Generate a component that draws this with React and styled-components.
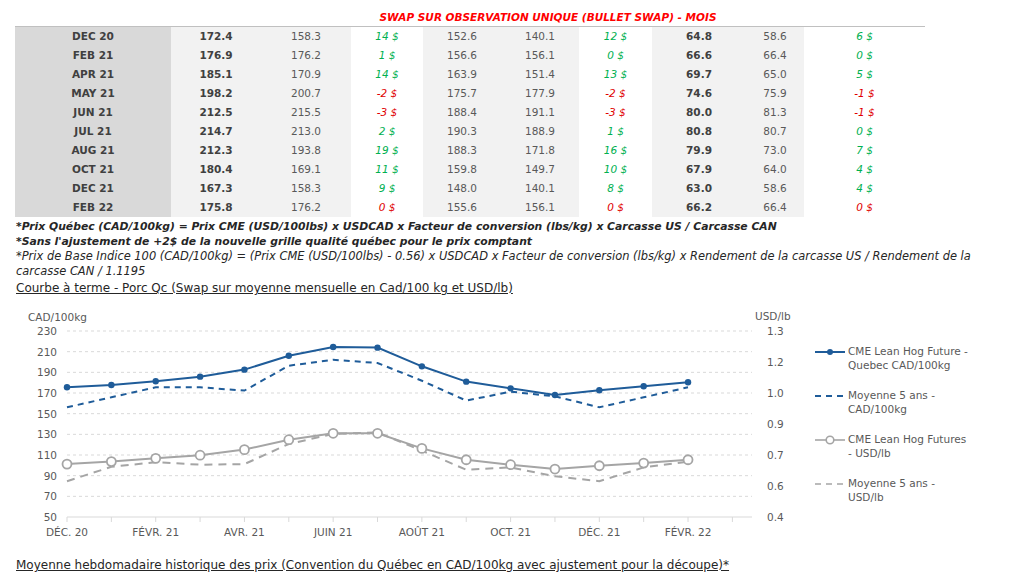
import React from "react";
import styled, { createGlobalStyle } from "styled-components";

const GlobalStyle = createGlobalStyle`
  html, body {
    margin: 0;
    padding: 0;
    background: #ffffff;
  }
  body {
    font-family: "DejaVu Sans", "Liberation Sans", sans-serif;
    color: #404040;
  }
`;

const rows = [
  ["DEC 20", "172.4", "158.3", "14 $", "152.6", "140.1", "12 $", "64.8", "58.6", "6 $"],
  ["FEB 21", "176.9", "176.2", "1 $", "156.6", "156.1", "0 $", "66.6", "66.4", "0 $"],
  ["APR 21", "185.1", "170.9", "14 $", "163.9", "151.4", "13 $", "69.7", "65.0", "5 $"],
  ["MAY 21", "198.2", "200.7", "-2 $", "175.7", "177.9", "-2 $", "74.6", "75.9", "-1 $", true],
  ["JUN 21", "212.5", "215.5", "-3 $", "188.4", "191.1", "-3 $", "80.0", "81.3", "-1 $", true],
  ["JUL 21", "214.7", "213.0", "2 $", "190.3", "188.9", "1 $", "80.8", "80.7", "0 $"],
  ["AUG 21", "212.3", "193.8", "19 $", "188.3", "171.8", "16 $", "79.9", "73.0", "7 $"],
  ["OCT 21", "180.4", "169.1", "11 $", "159.8", "149.7", "10 $", "67.9", "64.0", "4 $"],
  ["DEC 21", "167.3", "158.3", "9 $", "148.0", "140.1", "8 $", "63.0", "58.6", "4 $"],
  ["FEB 22", "175.8", "176.2", "0 $", "155.6", "156.1", "0 $", "66.2", "66.4", "0 $", true],
];

// column kind: m = month, b = bold value, v = value, d = difference
const cols = [
  { kind: "m", bg: "#d9d9d9" },
  { kind: "b", bg: "#f2f2f2" },
  { kind: "v", bg: "#f2f2f2" },
  { kind: "d", bg: "#ffffff" },
  { kind: "v", bg: "#f2f2f2" },
  { kind: "v", bg: "#f2f2f2" },
  { kind: "d", bg: "#ffffff" },
  { kind: "b", bg: "#f2f2f2" },
  { kind: "v", bg: "#f2f2f2" },
  { kind: "d", bg: "#ffffff" },
];

const COLS = "156px 90px 90px 72px 78px 78px 73px 94px 58px 121px";

const months = ["DÉC. 20", "FÉVR. 21", "AVR. 21", "JUIN 21", "AOÛT 21", "OCT. 21", "DÉC. 21", "FÉVR. 22"];

const cme = [175.5, 177.7, 181.3, 185.8, 192.6, 206.1, 214.5, 213.9, 195.8, 181, 174.5, 168, 172.6, 176.5, 180.4];
const cmeAvg = [156.2, 165.8, 175.5, 175.5, 172.3, 196.4, 202.1, 199, 181.9, 162.6, 171.3, 166.8, 156.2, 165.8, 175.5];
const usd = [0.656, 0.668, 0.684, 0.699, 0.726, 0.774, 0.805, 0.805, 0.732, 0.677, 0.653, 0.632, 0.648, 0.661, 0.677];
const usdAvg = [0.573, 0.643, 0.665, 0.653, 0.656, 0.753, 0.802, 0.81, 0.721, 0.629, 0.64, 0.597, 0.573, 0.64, 0.668];

const BLUE = "#1f5c99";
const GRAY = "#a5a5a5";

const X0 = 67;
const STEP = 44.36;
const TOP = 32;
const BOTTOM = 218;
const px = (i) => X0 + i * STEP;
const pyCad = (v) => BOTTOM - ((v - 50) / 180) * (BOTTOM - TOP);
const pyUsd = (v) => BOTTOM - ((v - 0.4) / 0.9) * (BOTTOM - TOP);
const pts = (arr, fy) => arr.map((v, i) => `${px(i).toFixed(1)},${fy(v).toFixed(1)}`).join(" ");

export default function App() {
  return (
    <React.Fragment>
      <GlobalStyle />
      <Page>
        <Table>
          <HeadRow>
            <span />
            <Title>SWAP SUR OBSERVATION UNIQUE (BULLET SWAP) - MOIS</Title>
          </HeadRow>
          <Body>
            {rows.map((r) => (
              <Row key={r[0]}>
                {cols.map((c, i) => (
                  <Cell key={i} $bg={c.bg} $kind={c.kind} $down={r[10]}>
                    {r[i]}
                  </Cell>
                ))}
              </Row>
            ))}
          </Body>
        </Table>

        <Notes>
          <Note $bold>
            *Prix Québec (CAD/100kg) = Prix CME (USD/100lbs) x USDCAD x Facteur de conversion (lbs/kg) x Carcasse US / Carcasse CAN
          </Note>
          <Note $bold>*Sans l'ajustement de +2$ de la nouvelle grille qualité québec pour le prix comptant</Note>
          <Note>
            *Prix de Base Indice 100 (CAD/100kg) = (Prix CME (USD/100lbs) - 0.56) x USDCAD x Facteur de conversion (lbs/kg) x Rendement de la carcasse US / Rendement de la
          </Note>
          <Note>carcasse CAN / 1.1195</Note>
          <Heading>Courbe à terme - Porc Qc (Swap sur moyenne mensuelle en Cad/100 kg et USD/lb)</Heading>
        </Notes>

        <ChartRow>
          <Plot width="805" height="250" viewBox="0 0 805 250">
            <AxisText x="28" y="18">CAD/100kg</AxisText>
            <AxisText x="755" y="17">USD/lb</AxisText>
            {[230, 210, 190, 170, 150, 130, 110, 90, 70, 50].map((v) => (
              <g key={v}>
                <AxisText x="57" y={pyCad(v)} textAnchor="end">{v}</AxisText>
                {v > 50 && (
                  <line x1={X0} x2="752" y1={pyCad(v)} y2={pyCad(v)} stroke="#d9d9d9" strokeDasharray="3 3" />
                )}
              </g>
            ))}
            {["1.3", "1.2", "1.0", "0.9", "0.7", "0.6", "0.4"].map((t, j) => (
              <AxisText key={t} x="767" y={TOP + j * 31}>{t}</AxisText>
            ))}
            <line x1={X0} x2="752" y1={BOTTOM} y2={BOTTOM} stroke="#d9d9d9" />
            {Array.from({ length: 16 }, (_, k) => (
              <line key={k} x1={px(k)} x2={px(k)} y1={BOTTOM} y2={BOTTOM + 5} stroke="#d9d9d9" />
            ))}
            {months.map((m, k) => (
              <AxisText key={m} x={px(k * 2)} y="233" textAnchor="middle">{m}</AxisText>
            ))}

            <polyline points={pts(usdAvg, pyUsd)} fill="none" stroke={GRAY} strokeWidth="2" strokeDasharray="8 6" />
            <polyline points={pts(usd, pyUsd)} fill="none" stroke={GRAY} strokeWidth="2" />
            {usd.map((v, i) => (
              <circle key={i} cx={px(i)} cy={pyUsd(v)} r="4.5" fill="#fff" stroke={GRAY} strokeWidth="1.8" />
            ))}
            <polyline points={pts(cmeAvg, pyCad)} fill="none" stroke={BLUE} strokeWidth="2" strokeDasharray="6 5" />
            <polyline points={pts(cme, pyCad)} fill="none" stroke={BLUE} strokeWidth="2" />
            {cme.map((v, i) => (
              <circle key={i} cx={px(i)} cy={pyCad(v)} r="3.2" fill={BLUE} />
            ))}
          </Plot>

          <Legend>
            <LegendItem>
              <Swatch width="30" height="14" viewBox="0 0 30 14">
                <line x1="0" x2="30" y1="7" y2="7" stroke={BLUE} strokeWidth="2" />
                <circle cx="15" cy="7" r="3" fill={BLUE} />
              </Swatch>
              <LegendLabel>CME Lean Hog Future -<br />Quebec CAD/100kg</LegendLabel>
            </LegendItem>
            <LegendItem>
              <Swatch width="30" height="14" viewBox="0 0 30 14">
                <line x1="0" x2="30" y1="7" y2="7" stroke={BLUE} strokeWidth="2" strokeDasharray="6 5" />
              </Swatch>
              <LegendLabel>Moyenne 5 ans -<br />CAD/100kg</LegendLabel>
            </LegendItem>
            <LegendItem>
              <Swatch width="30" height="14" viewBox="0 0 30 14">
                <line x1="0" x2="30" y1="7" y2="7" stroke={GRAY} strokeWidth="1.6" />
                <circle cx="15" cy="7" r="3.8" fill="#fff" stroke={GRAY} strokeWidth="1.6" />
              </Swatch>
              <LegendLabel>CME Lean Hog Futures<br />- USD/lb</LegendLabel>
            </LegendItem>
            <LegendItem>
              <Swatch width="30" height="14" viewBox="0 0 30 14">
                <line x1="0" x2="30" y1="7" y2="7" stroke={GRAY} strokeWidth="1.6" strokeDasharray="6 5" />
              </Swatch>
              <LegendLabel>Moyenne 5 ans -<br />USD/lb</LegendLabel>
            </LegendItem>
          </Legend>
        </ChartRow>

        <Heading $wide>
          Moyenne hebdomadaire historique des prix (Convention du Québec en CAD/100kg avec ajustement pour la découpe)*
        </Heading>
      </Page>
    </React.Fragment>
  );
}

const Page = styled.div`
  width: 1024px;
  height: 580px;
  overflow: hidden;
`;

const Table = styled.div`
  margin-left: 15px;
  width: 910px;
`;

const HeadRow = styled.div`
  display: grid;
  grid-template-columns: 156px 1fr;
  height: 26px;
  align-items: end;
  border-bottom: 1px solid #c0c0c0;
`;

const Title = styled.div`
  text-align: center;
  color: #ff0000;
  font-weight: bold;
  font-style: italic;
  font-size: 10.5px;
  line-height: 14px;
  padding-bottom: 2px;
`;

const Body = styled.div`
  display: flex;
  flex-direction: column;
`;

const Row = styled.div`
  display: grid;
  grid-template-columns: ${COLS};
  height: 19px;
`;

const Cell = styled.div`
  background: ${(p) => p.$bg};
  text-align: center;
  line-height: 19px;
  font-size: 10.5px;
  white-space: nowrap;
  font-weight: ${(p) => (p.$kind === "m" || p.$kind === "b" ? "bold" : "normal")};
  font-style: ${(p) => (p.$kind === "d" ? "italic" : "normal")};
  color: ${(p) =>
    p.$kind === "d" ? (p.$down ? "#e00000" : "#00b050") : p.$kind === "v" ? "#595959" : "#404040"};
`;

const Notes = styled.div`
  margin: 2px 0 0 16px;
  color: #262626;
`;

const Note = styled.div`
  line-height: 15px;
  font-style: italic;
  font-size: ${(p) => (p.$bold ? "10.8px" : "11.45px")};
  font-weight: ${(p) => (p.$bold ? "bold" : "normal")};
  white-space: nowrap;
`;

const Heading = styled.div`
  margin: ${(p) => (p.$wide ? "9px 0 0 16px" : "2px 0 0")};
  font-size: 12px;
  line-height: 15px;
  color: #262626;
  text-decoration: underline;
  white-space: nowrap;
`;

const ChartRow = styled.div`
  display: flex;
  margin-top: 3px;
  height: 250px;
`;

const Plot = styled.svg`
  flex: none;
  display: block;
`;

const AxisText = styled.text`
  font-size: 10.5px;
  fill: #595959;
  dominant-baseline: central;
`;

const Legend = styled.div`
  display: flex;
  flex-direction: column;
  gap: 17px;
  padding: 46px 0 0 10px;
`;

const LegendItem = styled.div`
  display: flex;
  align-items: flex-start;
  gap: 3px;
`;

const Swatch = styled.svg`
  flex: none;
`;

const LegendLabel = styled.div`
  font-size: 10.5px;
  line-height: 13.5px;
  color: #595959;
`;
